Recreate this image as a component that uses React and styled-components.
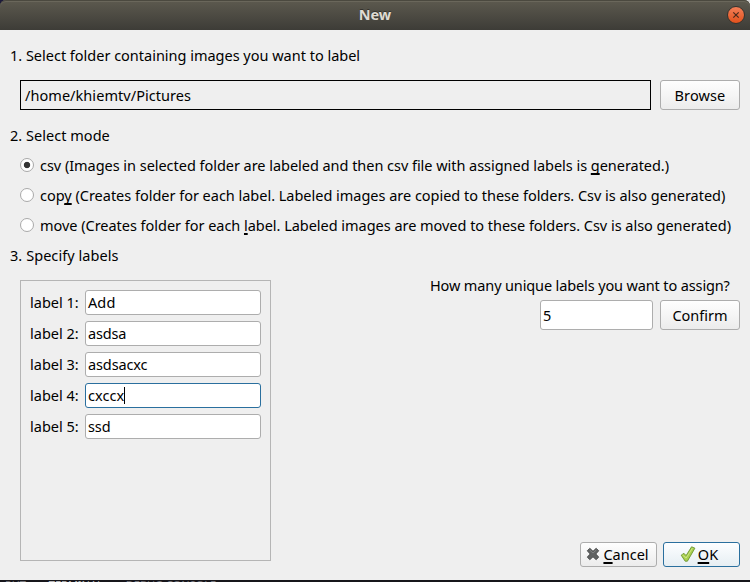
import React from "react";
import styled, { createGlobalStyle, css } from "styled-components";

const GlobalStyle = createGlobalStyle`
  * { box-sizing: border-box; }
  body {
    margin: 0;
    background: #17161b;
    color: #000;
    font: 14.5px/20px "Noto Sans", "Open Sans", sans-serif;
    overflow: hidden;
  }
`;

const Screen = styled.div`
  width: 750px;
  height: 582px;
  display: flex;
  flex-direction: column;
  overflow: hidden;
`;

const Dialog = styled.main`
  height: 580px;
  flex: none;
  display: flex;
  flex-direction: column;
  background: #efefef;
`;

const TitleBar = styled.header`
  height: 30px;
  flex: none;
  display: grid;
  grid-template-columns: 30px 1fr 30px;
  align-items: center;
  justify-items: center;
  background: linear-gradient(#5d5a4f, #3d3c37);
  box-shadow: inset 0 1px #4b493f, inset 0 2px #6a675b;
  border-radius: 6px 6px 0 0;
`;

const TitleBacking = styled.div`
  flex: none;
  background: linear-gradient(90deg, #1d1b3a 50%, #d8d8d8 50%);
`;

const Title = styled.h1`
  grid-column: 2;
  margin: 0;
  padding-bottom: 2px;
  font-size: 14.5px;
  line-height: 20px;
  font-weight: 700;
  color: #dfdbd2;
  text-shadow: 0 -1px #33322d;
`;

const CloseButton = styled.button`
  width: 18px;
  height: 18px;
  padding: 0;
  margin-left: 2px;
  display: grid;
  place-items: center;
  border: 1px solid #35332e;
  border-radius: 50%;
  background: linear-gradient(#f37f58, #e2511c);
`;

const Body = styled.div`
  flex: 1;
  display: flex;
  flex-direction: column;
  padding: 10px 10px 13px;
`;

const Tracked = styled.span`
  white-space: nowrap;
  letter-spacing: ${(p) => p.$track || 0}px;
`;

const Step = styled.h2`
  height: 30px;
  margin: 0;
  font-size: inherit;
  font-weight: 400;
  line-height: 30px;
`;

const FolderRow = styled.div`
  display: grid;
  grid-template-columns: 631px 80px;
  justify-content: space-between;
  margin: 10px 0 10px 10px;
  height: 30px;
`;

const PathBox = styled.div`
  border: 1px solid #000;
  padding: 0 4px;
  line-height: 28px;
`;

const buttonFocus = css`
  border-color: #2a6f9e;
  background: linear-gradient(#fdfeff, #e6eef3);
`;

const Button = styled.button`
  width: ${(p) => p.$width}px;
  height: ${(p) => p.$height}px;
  padding: 0;
  display: flex;
  align-items: center;
  justify-content: center;
  gap: 3px;
  color: #000;
  font: inherit;
  border: 1px solid #adadad;
  border-radius: 3px;
  background: linear-gradient(#fefefe, #ececec);
  ${(p) => p.$primary && buttonFocus}
`;

const DialogButton = styled(Button)`
  padding: 0 ${(p) => (p.$primary ? 5 : 2)}px 1px 0;
  gap: ${(p) => (p.$primary ? 2 : 3)}px;
  line-height: 20px;
`;

const Mnemonic = styled.span`
  text-decoration: underline;
  text-decoration-thickness: 1.5px;
  text-underline-offset: 2px;
  text-decoration-skip-ink: none;
`;

const ModeRow = styled.label`
  height: 30px;
  display: flex;
  align-items: center;
  gap: 6px;
  padding-left: 10px;
  line-height: 30px;
`;

const RadioDot = styled.span`
  width: 14px;
  height: 14px;
  flex: none;
  border: 1px solid #a9a9a9;
  border-radius: 50%;
  background: ${(p) =>
    p.$checked ? "radial-gradient(circle, #353535 2.8px, #fff 3.6px)" : "#fff"};
`;

const Columns = styled.div`
  flex: 1;
  display: flex;
  justify-content: space-between;
  padding-left: 10px;
`;

const LabelPanel = styled.section`
  width: 251px;
  height: 281px;
  margin-top: 10px;
  padding: 9px;
  border: 1px solid #b5b5b5;
  display: flex;
  flex-direction: column;
  gap: 6px;
`;

const LabelRow = styled.label`
  display: grid;
  grid-template-columns: 55px 176px;
  align-items: center;
  height: 25px;
  line-height: 23px;
`;

const Field = styled.div`
  width: ${(p) => p.$width}px;
  height: ${(p) => p.$height}px;
  display: flex;
  align-items: center;
  padding: 0 2px;
  border: 1px solid ${(p) => (p.$focused ? "#2a6f9e" : "#adadad")};
  border-radius: 3px;
  background: #fff;
`;

const Caret = styled.span`
  width: 1px;
  height: 17px;
  background: #000;
`;

const CountPane = styled.section`
  display: flex;
  flex-direction: column;
  align-items: flex-end;
`;

const Question = styled.div`
  width: 310px;
  height: 30px;
  line-height: 30px;
`;

const CountRow = styled.div`
  display: flex;
  gap: 7px;
`;

const Footer = styled.footer`
  margin-top: auto;
  display: flex;
  gap: 6px;
`;

const Terminal = styled.div`
  height: 2px;
  flex: none;
  display: flex;
  gap: 23px;
  overflow: hidden;
  padding: 1px 0 0 5px;
  font-size: 11px;
  line-height: 7px;
`;

const TerminalTab = styled.span`
  color: ${(p) => (p.$active ? "#b5b5b8" : "#75757c")};
`;

const CancelIcon = () => (
  <svg width="14" height="14" viewBox="0 0 14 14">
    <path
      d="M3.8 1.3 7 4.3l3.2-3 2.5 2.5L9.8 7l2.9 3.1-2.5 2.6L7 9.8l-3.2 2.9-2.5-2.6L4.2 7 1.3 3.8z"
      fill="#606262"
      stroke="#454747"
      strokeWidth=".9"
      strokeLinejoin="round"
    />
    <path d="m3.7 3 3.3 3 3.3-3" fill="none" stroke="#898b8b" strokeWidth=".8" />
  </svg>
);

const OkIcon = () => (
  <svg width="16" height="16" viewBox="0 0 16 16">
    <path
      d="M1.2 9.2 3.9 7.3 6.1 9.6 11.6.8l3.3 1.4L7.4 15.2H5.2z"
      fill="#a9d04c"
      stroke="#6b9433"
      strokeWidth=".9"
      strokeLinejoin="round"
    />
    <path d="m2.6 9.1 3.5 3L12.4 2.2" fill="none" stroke="#cfe58e" strokeWidth=".9" />
  </svg>
);

const modes = [
  {
    before: "csv (Images in selected folder are labeled and then csv file with assigned labels is ",
    key: "g",
    after: "enerated.)",
    track: -0.037,
    checked: true,
  },
  {
    before: "cop",
    key: "y",
    after: " (Creates folder for each label. Labeled images are copied to these folders. Csv is also generated)",
    track: -0.018,
  },
  {
    before: "move (Creates folder for each ",
    key: "l",
    after: "abel. Labeled images are moved to these folders. Csv is also generated)",
    track: -0.03,
  },
];

const labels = [
  { text: "Add", track: 0.1 },
  { text: "asdsa", track: -0.2 },
  { text: "asdsacxc", track: -0.12 },
  { text: "cxccx", track: 0.05, focused: true },
  { text: "ssd", track: -0.1 },
];

export default function App() {
  return (
    <Screen>
      <GlobalStyle />
      <Dialog>
        <TitleBacking>
          <TitleBar>
            <Title>New</Title>
            <CloseButton aria-label="Close">
              <svg width="8" height="8" viewBox="0 0 8 8">
                <path d="m1.3 1.3 5.4 5.4m0-5.4L1.3 6.7" stroke="#4a2a1c" strokeWidth="1.2" />
              </svg>
            </CloseButton>
          </TitleBar>
        </TitleBacking>
        <Body>
          <Step>
            <Tracked $track={-0.01}>1. Select folder containing images you want to label</Tracked>
          </Step>
          <FolderRow>
            <PathBox>
              <Tracked $track={0.05}>/home/khiemtv/Pictures</Tracked>
            </PathBox>
            <Button $width={80} $height={30}>
              <Tracked $track={0.12}>Browse</Tracked>
            </Button>
          </FolderRow>
          <Step>
            <Tracked $track={0.03}>2. Select mode</Tracked>
          </Step>
          {modes.map((m) => (
            <ModeRow key={m.before}>
              <RadioDot $checked={m.checked} />
              <Tracked $track={m.track}>
                {m.before}
                <Mnemonic>{m.key}</Mnemonic>
                {m.after}
              </Tracked>
            </ModeRow>
          ))}
          <Step>
            <Tracked $track={0.06}>3. Specify labels</Tracked>
          </Step>
          <Columns>
            <LabelPanel>
              {labels.map((l, i) => (
                <LabelRow key={l.text}>
                  <Tracked>label {i + 1}:</Tracked>
                  <Field $width={176} $height={25} $focused={l.focused}>
                    <Tracked $track={l.track}>{l.text}</Tracked>
                    {l.focused && <Caret />}
                  </Field>
                </LabelRow>
              ))}
            </LabelPanel>
            <CountPane>
              <Question>
                <Tracked $track={-0.13}>How many unique labels you want to assign?</Tracked>
              </Question>
              <CountRow>
                <Field $width={113} $height={30}>5</Field>
                <Button $width={80} $height={30}>Confirm</Button>
              </CountRow>
              <Footer>
                <DialogButton $width={77} $height={25}>
                  <CancelIcon />
                  <Tracked>
                    <Mnemonic>C</Mnemonic>ancel
                  </Tracked>
                </DialogButton>
                <DialogButton $width={77} $height={25} $primary>
                  <OkIcon />
                  <Tracked $track={0.2}>
                    <Mnemonic>O</Mnemonic>K
                  </Tracked>
                </DialogButton>
              </Footer>
            </CountPane>
          </Columns>
        </Body>
      </Dialog>
      <Terminal>
        <TerminalTab>PUT</TerminalTab>
        <TerminalTab $active>TERMINAL</TerminalTab>
        <TerminalTab>DEBUG CONSOLE</TerminalTab>
      </Terminal>
    </Screen>
  );
}
